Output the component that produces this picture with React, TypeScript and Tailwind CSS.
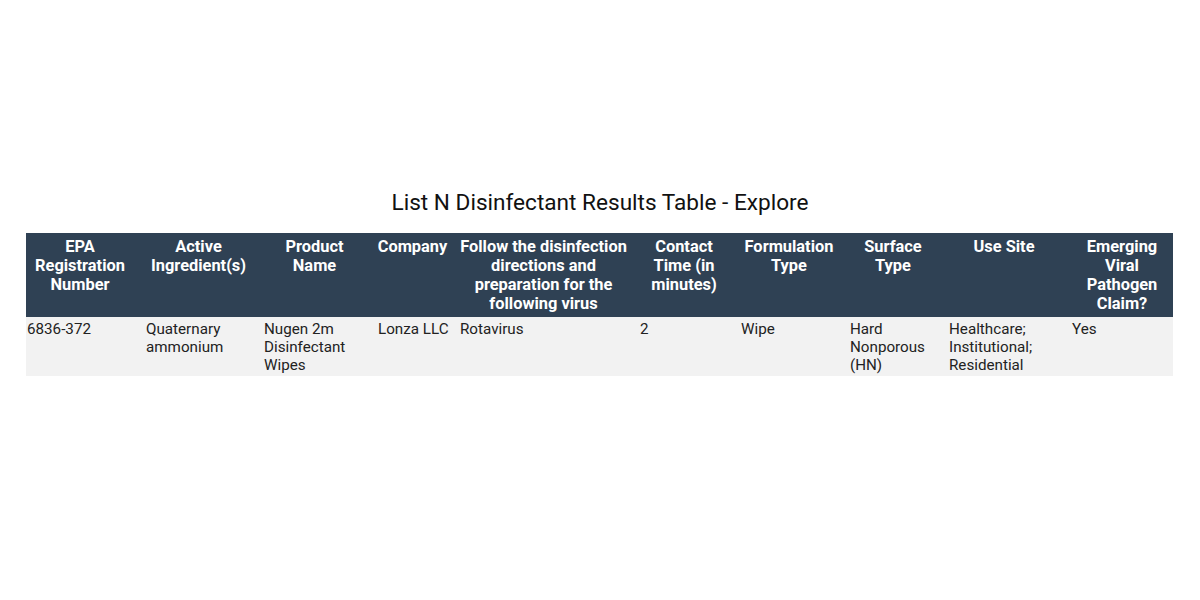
const columns = [
  { title: "EPA Registration Number", width: "w-[119px]" },
  { title: "Active Ingredient(s)", width: "w-[118px]" },
  { title: "Product Name", width: "w-[114px]" },
  { title: "Company", width: "w-[82px]" },
  { title: "Follow the disinfection directions and preparation for the following virus", width: "w-[180px]" },
  { title: "Contact Time (in minutes)", width: "w-[101px]" },
  { title: "Formulation Type", width: "w-[109px]" },
  { title: "Surface Type", width: "w-[99px]" },
  { title: "Use Site", width: "w-[123px]" },
  { title: "Emerging Viral Pathogen Claim?", width: "w-[102px]" },
];

const row = [
  "6836-372",
  "Quaternary ammonium",
  "Nugen 2m Disinfectant Wipes",
  "Lonza LLC",
  "Rotavirus",
  "2",
  "Wipe",
  "Hard Nonporous (HN)",
  "Healthcare; Institutional; Residential",
  "Yes",
];

const App = () => {
  return (
    <div
      className="w-[1200px] h-[600px] bg-white pt-[190px] px-[26px]"
      style={{ fontFamily: "Roboto, 'Liberation Sans', sans-serif" }}
    >
      <h1 className="text-center text-[22.6px] leading-[26px] text-[#111] mb-[17px]">
        List N Disinfectant Results Table - Explore
      </h1>
      <table className="table-fixed w-[1147px] border-collapse">
        <thead>
          <tr className="bg-[#2f4154]">
            {columns.map((col, i) => (
              <th
                key={col.title}
                className={`${col.width} align-top text-center text-white font-bold text-[16.4px] leading-[19px] pt-[4px] pb-[4px] ${
                  i === columns.length - 1 ? "pr-0" : "pr-[11px]"
                }`}
              >
                {col.title}
              </th>
            ))}
          </tr>
        </thead>
        <tbody>
          <tr className="bg-[#f2f2f2]">
            {row.map((cell, i) => (
              <td
                key={i}
                className="align-top text-left text-[15.2px] leading-[18px] text-[#222] pt-[3px] pb-[2px] pl-[1px] pr-[10px]"
              >
                {cell}
              </td>
            ))}
          </tr>
        </tbody>
      </table>
    </div>
  );
};

export default App;
